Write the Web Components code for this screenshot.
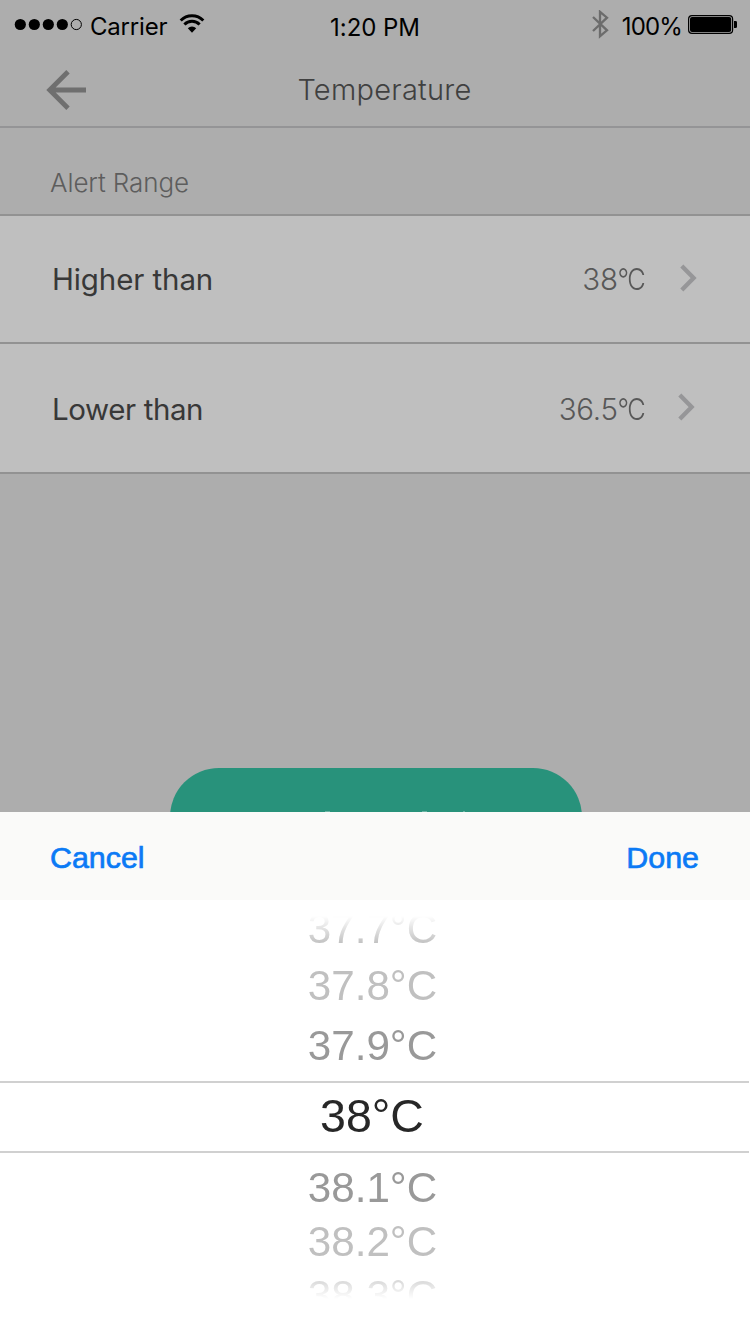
<!DOCTYPE html>
<html lang="en">
<head>
<meta charset="utf-8">
<title>Temperature</title>
<style>
html,body{margin:0;padding:0}
body{width:750px;height:1334px;overflow:hidden;background:#fff;font-family:Inter,"Liberation Sans",sans-serif}
</style>
</head>
<body>
<temperature-app></temperature-app>
<script>
function define(name, html) {
  customElements.define(name, class extends HTMLElement {
    constructor() {
      super();
      this.attachShadow({ mode: "open" }).innerHTML = html;
    }
  });
}

define("status-bar", `
<style>
:host{display:grid;grid-template-columns:1fr auto 1fr;height:53px;line-height:53px;font-size:24px;color:#000;white-space:nowrap}
.left,.right{display:flex;align-items:flex-start}
.left{padding-left:14px}
.right{justify-content:flex-end;padding-right:13px}
svg{display:block;flex:none}
.carrier{margin-left:7px;letter-spacing:-.2px}
.wifi{margin:14px 0 0 12px}
.time{padding-top:1px;letter-spacing:-.05px}
.bt{margin:10px 13px 0 0}
.bat{margin:15px 0 0 6px}
.pct{letter-spacing:-.85px}
</style>
<div class="left">
<svg width="69" height="53"><circle cx="6.3" cy="24.5" r="5.6"/><circle cx="20.3" cy="24.5" r="5.6"/><circle cx="34.3" cy="24.5" r="5.6"/><circle cx="48.3" cy="24.5" r="5.6"/><circle cx="62.3" cy="24.5" r="5.1" fill="none" stroke="#000"/></svg>
<span class="carrier">Carrier</span>
<svg class="wifi" width="26" height="20" fill="none" stroke="#000" stroke-width="2.9"><path d="M1.7 6.6A15.5 15.5 0 0 1 24.3 6.6M5.4 10.6A10.4 10.4 0 0 1 20.6 10.6"/><path d="M8.8 14.2A6 6 0 0 1 17.2 14.2L13 18.8Z" fill="#000" stroke="none"/></svg>
</div>
<span class="time">1:20 PM</span>
<div class="right">
<svg class="bt" width="18" height="29" fill="none" stroke="#6c6c6c" stroke-width="2.3"><path d="M2 7L16 20.3L9 26.2V1.8L16 7.7L2 21"/></svg>
<span class="pct">100%</span>
<svg class="bat" width="49" height="19"><rect x=".6" y=".6" width="44" height="17.8" rx="3.4" fill="none" stroke="#000" stroke-width="1.2"/><rect x="2" y="2" width="41.2" height="15" rx="2"/><path d="M46 6h1.6q1.4 0 1.4 1.3v4.4q0 1.3-1.4 1.3H46z"/></svg>
</div>`);

define("nav-bar", `
<style>
:host{display:grid;grid-template-columns:100px 1fr 100px;align-items:center;height:73px;border-bottom:2px solid #949496;color:#404040}
svg{display:block;margin-left:45px}
.title{text-align:center;padding-left:19px;font-size:29px;font-weight:360;letter-spacing:.25px;line-height:73px}
</style>
<svg width="42" height="42" fill="none" stroke="#6f6f6f" stroke-width="4.8"><path d="M41 21H4.5M23 2.7L4.7 21L23 39.3"/></svg>
<div class="title"><slot></slot></div>`);

define("section-title", `
<style>
:host{display:block;height:86px;box-sizing:border-box;padding:24px 0 0 50px;line-height:62px;font-size:26px;font-weight:360;letter-spacing:-.1px;color:#5d5d5d}
</style><slot></slot>`);

define("setting-row", `
<style>
:host{display:flex;align-items:center;height:var(--row-height,126px);border-top:2px solid #929292;background:#bfbfbf;font-size:29.5px;color:#383838}
.label{flex:1;padding:var(--drop,0) 0 0 52px;letter-spacing:var(--track,-.1px);font-weight:370}
.value{padding-top:var(--drop,0);font-weight:320;color:#585858;letter-spacing:-.3px}
.unit{display:inline-block;transform:scaleX(.86);transform-origin:right;margin-left:-5px;letter-spacing:-1.6px}
svg{display:block;margin:0 var(--end,53px) 3px var(--gap,36px)}
</style>
<span class="label"><slot></slot></span>
<span class="value"><slot name="value"></slot><span class="unit">°C</span></span>
<svg width="17" height="28" fill="none" stroke="#969698" stroke-width="4.3"><path d="M1.8 2L13.6 14L1.8 26"/></svg>`);

define("primary-button", `
<style>
:host{display:block;width:412px;height:98px;border-radius:49px;background:#28927b}
svg{display:block}
</style>
<svg width="412" height="45" fill="#69b3a3"><rect x="155" y="43" width="5" height="1"/><rect x="252" y="43" width="5" height="1"/><rect x="293" y="43" width="2" height="1"/></svg>`);

define("sheet-toolbar", `
<style>
:host{display:flex;justify-content:space-between;height:88px;padding:0 51px 0 50px;background:#fafaf9;line-height:91px;font-family:"Liberation Sans",sans-serif;font-size:30.4px;color:#0b7af5;-webkit-text-stroke:.7px #0b7af5}
</style><slot></slot>`);

define("value-wheel", `
<style>
:host{display:block;height:434px;background:#fff;font-family:"Liberation Sans",sans-serif;
-webkit-mask-image:linear-gradient(#0000 16px,#000 44px,#000 368px,#0000 399px);mask-image:linear-gradient(#0000 16px,#000 44px,#000 368px,#0000 399px)}
</style><slot></slot>`);

define("wheel-item", `
<style>
:host{display:block;height:var(--h,54px);line-height:calc(var(--h,54px) + 2px);text-align:center;padding-right:5px;font-size:42.2px;color:var(--tone,#c0c0c0)}
:host([near]){--tone:#999}
:host([selected]){--h:68px;line-height:66px;font-size:46.5px;--tone:#272727;border:solid #d0d0d0;border-width:2px 0;width:744px}
</style><slot></slot>`);

define("temperature-app", `
<style>
:host{display:block;width:750px;height:1334px;overflow:hidden}
.screen{height:812px;overflow:hidden;background:#adadad}
.list{border-bottom:2px solid #929292}
.second{--row-height:128px;--drop:2px;--end:55px;--gap:34px;--track:-.4px}
primary-button{margin:294px 0 0 170px}
.up{--h:60px}
</style>
<div class="screen">
<status-bar></status-bar>
<nav-bar>Temperature</nav-bar>
<section-title>Alert Range</section-title>
<div class="list">
<setting-row>Higher than<span slot="value">38</span></setting-row>
<setting-row class="second">Lower than<span slot="value">36.5</span></setting-row>
</div>
<primary-button></primary-button>
</div>
<sheet-toolbar><span>Cancel</span><span>Done</span></sheet-toolbar>
<value-wheel>
<wheel-item style="--h:55px">37.7°C</wheel-item>
<wheel-item class="up">37.8°C</wheel-item>
<wheel-item class="up" near style="padding-bottom:6px">37.9°C</wheel-item>
<wheel-item selected>38°C</wheel-item>
<wheel-item near style="padding-top:7px">38.1°C</wheel-item>
<wheel-item>38.2°C</wheel-item>
<wheel-item>38.3°C</wheel-item>
</value-wheel>`);
</script>
</body>
</html>
